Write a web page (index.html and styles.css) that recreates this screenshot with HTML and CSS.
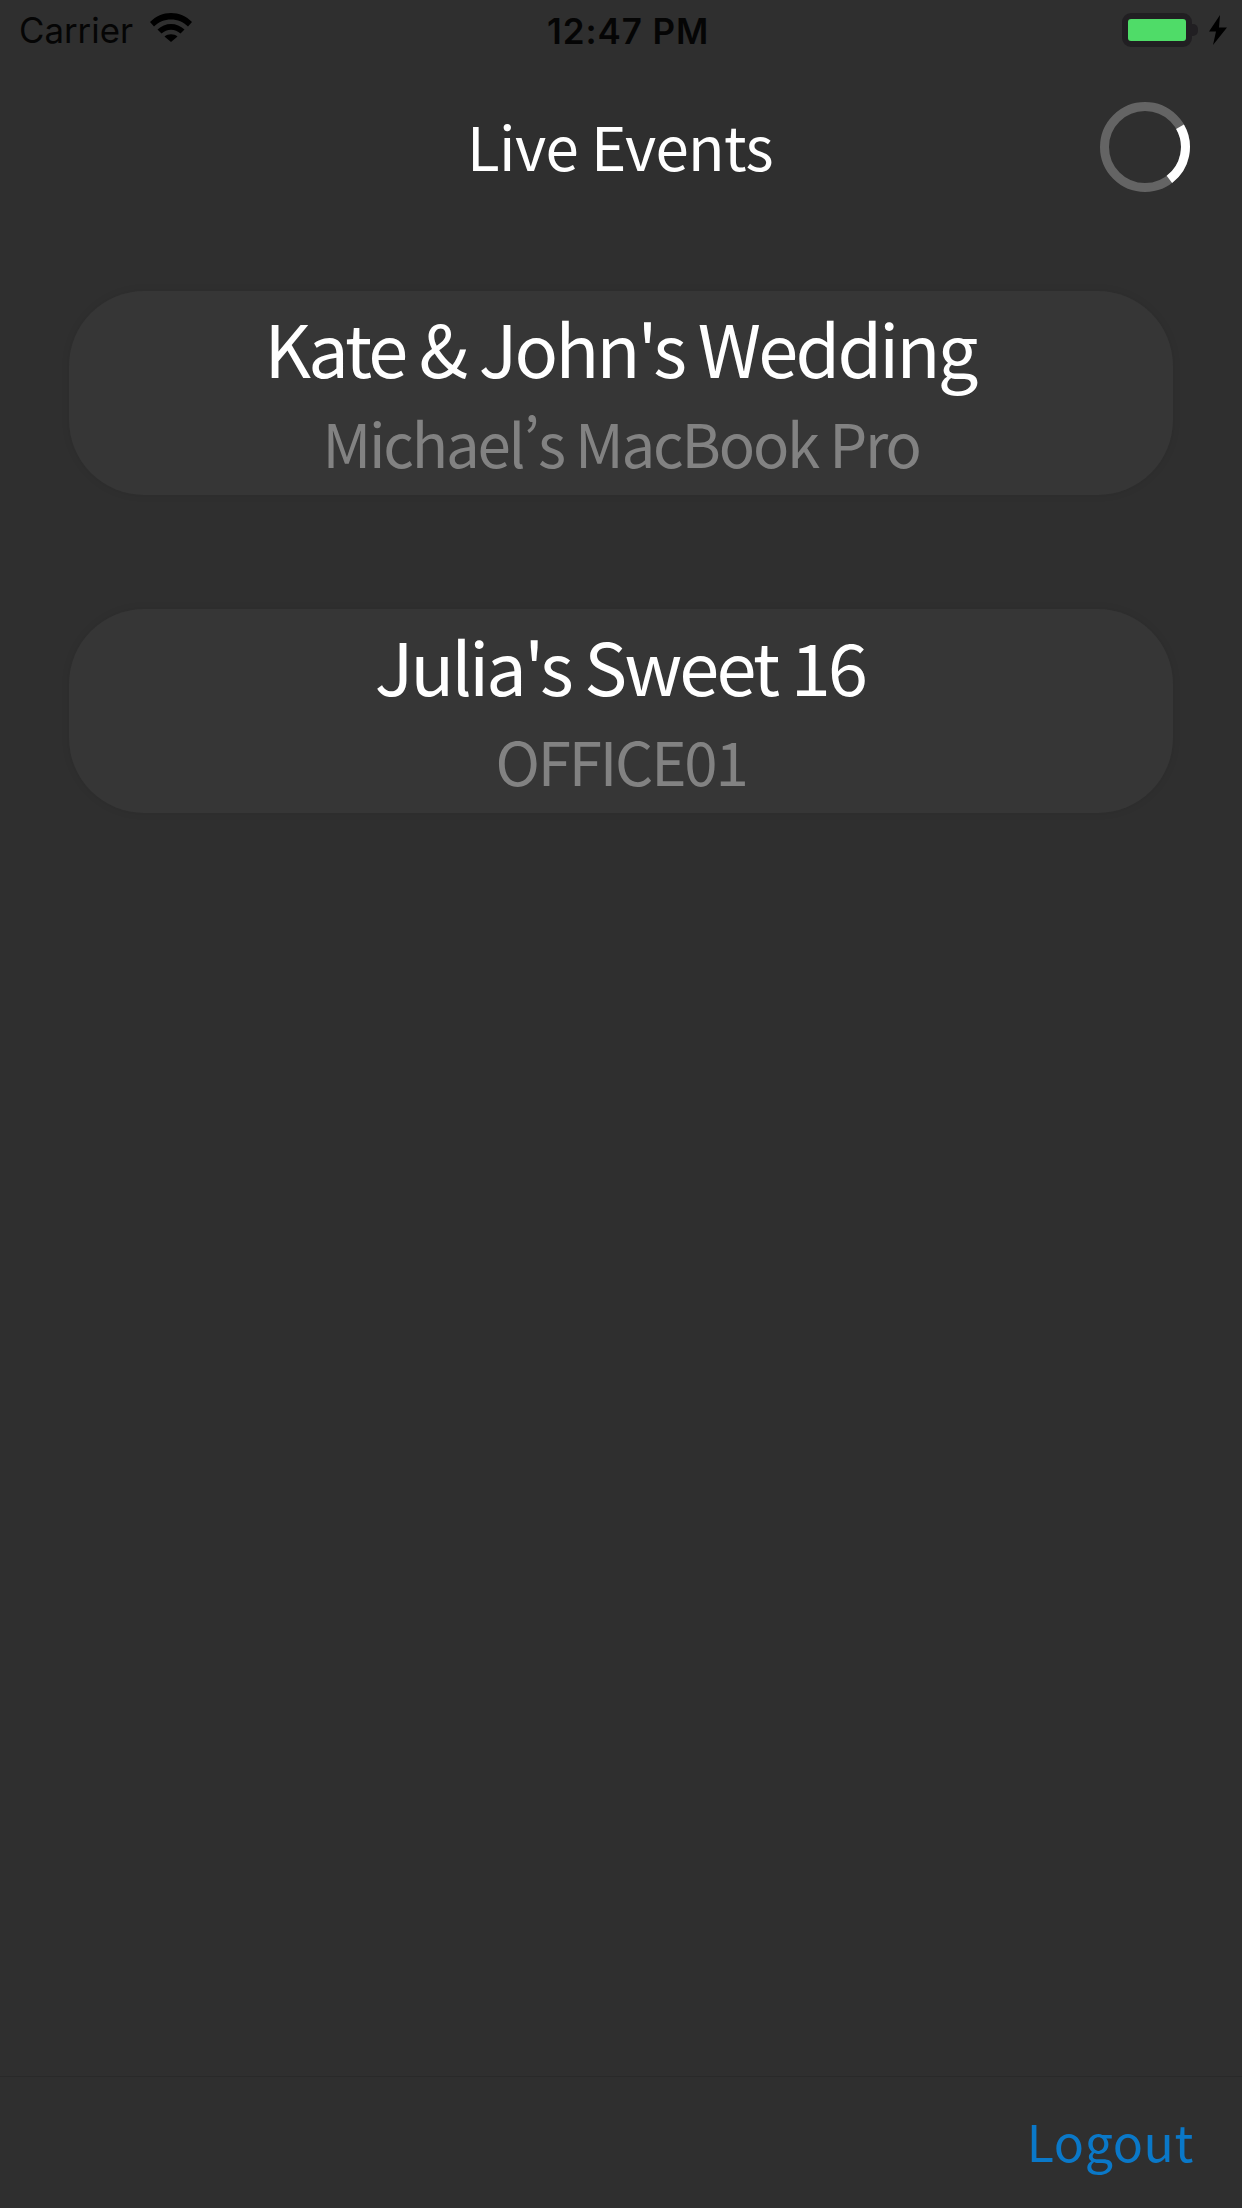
FILE: index.html
```html
<!DOCTYPE html>
<html lang="en">
<head>
<meta charset="utf-8">
<title>Live Events</title>
<link rel="stylesheet" href="styles.css">
</head>
<body>
<div class="screen">
  <div class="status">
    <div class="status-left">
      <span class="carrier">Carrier</span>
      <svg class="wifi" width="42" height="30" viewBox="0 0 42 30"><path d="M0 10C6 4 13 1 21 1S36 4 42 10L38 14.500C33.500 10 27.500 7.500 21 7.500S8.500 10 4 14.500Z"/><path d="M7.500 17.500C11.300 14 16 12 21 12S30.700 14 34.500 17.500L30.500 21.500C27.700 19 24.700 17.700 21 17.700S14.300 19 11.500 21.500Z"/><path d="M14.500 24.500C16.300 23 18.500 22.300 21 22.300S25.700 23 27.500 24.500L21 30Z"/></svg>
    </div>
    <span class="time">12:47 PM</span>
    <div class="status-right">
      <div class="battery"><div class="battery-fill"></div></div>
      <div class="battery-cap"></div>
      <svg class="bolt" width="18" height="30" viewBox="0 0 18 30"><path d="M11 0 0 16.500H7L4 30 18 12.500H10Z"/></svg>
    </div>
  </div>
  <header class="nav">
    <h1 class="nav-title">Live Events</h1>
    <svg class="spinner" width="92" height="92" viewBox="0 0 92 92"><circle cx="46" cy="46" r="40.500" fill="none" stroke="#646464" stroke-width="9"/><path d="M81 25.750A40.500 40.500 0 0 1 70.400 78.300" fill="none" stroke="#fff" stroke-width="9"/></svg>
  </header>
  <main class="list">
    <div class="card">
      <div class="card-title">Kate &amp; John's Wedding</div>
      <div class="card-sub">Michael’s MacBook Pro</div>
    </div>
    <div class="card">
      <div class="card-title">Julia's Sweet 16</div>
      <div class="card-sub">OFFICE01</div>
    </div>
  </main>
  <footer class="toolbar">
    <span class="logout">Logout</span>
  </footer>
</div>
</body>
</html>
```
FILE: styles.css
```css
* { box-sizing: border-box; }
html, body { margin: 0; padding: 0; }
body { background: #2f2f2f; font-family: "Noto Sans CJK SC", "Noto Sans", sans-serif; font-feature-settings: "pwid"; }
.screen { width: 1242px; height: 2208px; display: flex; flex-direction: column; background: #2f2f2f; overflow: hidden; }
.status { height: 60px; position: relative; display: flex; align-items: center; justify-content: space-between; padding: 0 15px 0 19px; color: #050505; font-family: "Inter", "Liberation Sans", sans-serif; }
.status-left { display: flex; align-items: center; gap: 17px; }
.carrier { font-size: 34.800px; font-weight: 400; line-height: 60px; }
.wifi { display: block; fill: #000; margin-top: -6px; }
.time { position: absolute; left: 547px; top: 1px; font-size: 35px; font-weight: 600; line-height: 60px; letter-spacing: 0.9px; }
.status-right { display: flex; align-items: center; }
.battery { width: 70px; height: 34px; border: 6px solid #211f22; border-radius: 9px; background: #211f22; }
.battery-fill { width: 100%; height: 100%; background: #4fdc68; border-radius: 3px; }
.battery-cap { width: 6px; height: 12px; background: #211f22; border-radius: 0 5px 5px 0; margin-right: 11px; }
.bolt { display: block; fill: #000; }
.nav { height: 88px; margin-top: 41px; display: flex; align-items: center; justify-content: center; position: relative; padding-right: 2px; }
.nav-title { margin: 0; font-size: 60px; font-weight: 400; line-height: 88px; color: #fff; letter-spacing: -0.6px; }
.spinner { position: absolute; left: 1099px; top: 0; display: block; }
.list { flex: 1; display: flex; flex-direction: column; gap: 114px; padding: 102px 69px 0; }
.card { height: 204px; border-radius: 75px; background: #363636; box-shadow: 0 0 8px rgba(0, 0, 0, 0.08); display: flex; flex-direction: column; align-items: center; }
.card-title { font-size: 72px; line-height: 80px; color: #fff; margin-top: 16px; margin-right: 2px; letter-spacing: -2.700px; }
.card-sub { font-size: 60px; line-height: 70px; color: #828282; margin-top: 20px; letter-spacing: -2.200px; }
.toolbar { height: 132px; border-top: 1px solid #292929; display: flex; align-items: center; justify-content: flex-end; padding: 0 48px 6px 0; }
.logout { font-size: 50px; line-height: 126px; color: #0a78c8; letter-spacing: 0.6px; }
```
